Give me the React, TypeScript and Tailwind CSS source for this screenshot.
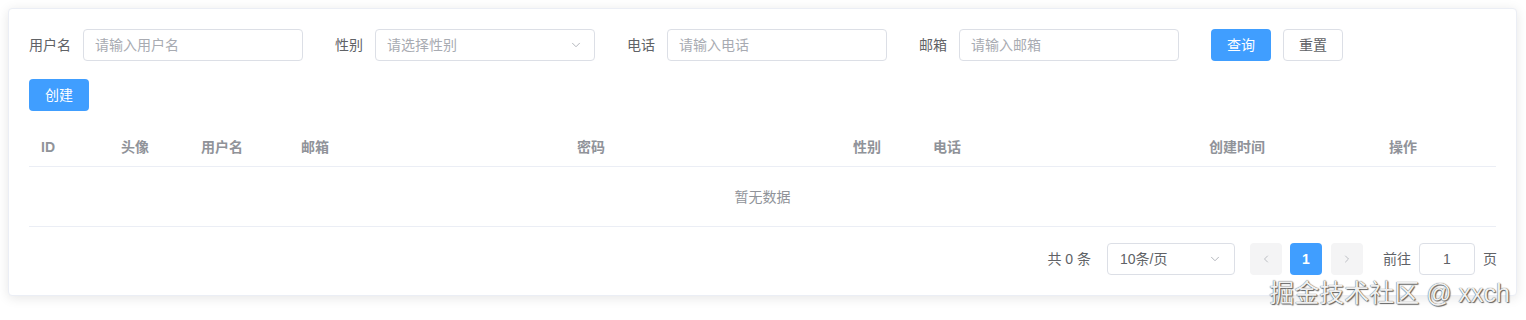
import { ChevronDown, ChevronLeft, ChevronRight } from "lucide-react";

const columns = [
  "ID",
  "头像",
  "用户名",
  "邮箱",
  "密码",
  "性别",
  "电话",
  "创建时间",
  "操作",
];

function TextInput({ placeholder }: { placeholder: string }) {
  return (
    <input
      className="h-8 w-[220px] rounded border border-[#dcdfe6] bg-white px-[11px] text-sm text-[#606266] outline-none placeholder:text-[#a8abb2]"
      placeholder={placeholder}
    />
  );
}

function FormItem({ label, children }: { label: string; children: React.ReactNode }) {
  return (
    <div className="mr-8 flex items-center">
      <label className="mr-3 text-sm leading-8 text-[#606266]">{label}</label>
      {children}
    </div>
  );
}

export default function App() {
  return (
    <div
      className="relative min-h-[320px] bg-white pl-[8px] pr-[9px] pt-[8px]"
      style={{ fontFamily: '"Helvetica Neue", "Liberation Sans", "Noto Sans CJK SC", sans-serif' }}
    >
      <div className="rounded border border-[#ebeef5] bg-white p-5 shadow-[0_2px_12px_0_rgba(0,0,0,0.1)]">
        {/* search form */}
        <div className="flex items-center">
          <FormItem label="用户名">
            <TextInput placeholder="请输入用户名" />
          </FormItem>
          <FormItem label="性别">
            <div className="flex h-8 w-[220px] items-center justify-between rounded border border-[#dcdfe6] pl-[11px] pr-[11px]">
              <span className="text-sm text-[#a8abb2]">请选择性别</span>
              <ChevronDown size={14} strokeWidth={1.5} className="text-[#a8abb2]" />
            </div>
          </FormItem>
          <FormItem label="电话">
            <TextInput placeholder="请输入电话" />
          </FormItem>
          <FormItem label="邮箱">
            <TextInput placeholder="请输入邮箱" />
          </FormItem>
          <button className="h-8 w-[60px] rounded bg-[#409eff] text-sm text-white">查询</button>
          <button className="ml-3 h-8 w-[60px] rounded border border-[#dcdfe6] bg-white text-sm text-[#606266]">
            重置
          </button>
        </div>

        <div className="mt-[18px]">
          <button className="h-8 w-[60px] rounded bg-[#409eff] text-sm text-white">创建</button>
        </div>

        {/* table */}
        <div className="mt-4">
          <div className="grid h-10 grid-cols-[80px_80px_100px_276px_276px_80px_276px_180px_1fr] items-center border-b border-[#ebeef5]">
            {columns.map((c) => (
              <div key={c} className="px-3 text-sm font-bold text-[#909399]">
                {c}
              </div>
            ))}
          </div>
          <div className="flex h-[60px] items-center justify-center border-b border-[#ebeef5] text-sm text-[#909399]">
            暂无数据
          </div>
        </div>

        {/* pagination */}
        <div className="-mr-[1px] mt-4 flex h-8 items-center justify-end text-sm text-[#606266]">
          <span>共 0 条</span>
          <div className="ml-4 flex h-8 w-[128px] items-center justify-between rounded border border-[#dcdfe6] px-3">
            <span>10条/页</span>
            <ChevronDown size={14} strokeWidth={1.5} className="text-[#a8abb2]" />
          </div>
          <button className="ml-[15px] flex h-8 w-8 items-center justify-center rounded bg-[#f4f4f5] text-[#a8abb2]">
            <ChevronLeft size={12} strokeWidth={1.5} />
          </button>
          <button className="ml-2 flex h-8 w-8 items-center justify-center rounded bg-[#409eff] font-bold text-white">
            1
          </button>
          <button className="ml-[9px] flex h-8 w-8 items-center justify-center rounded bg-[#f4f4f5] text-[#a8abb2]">
            <ChevronRight size={12} strokeWidth={1.5} />
          </button>
          <span className="ml-5">前往</span>
          <input
            className="mx-2 h-8 w-[56px] rounded border border-[#dcdfe6] text-center text-sm text-[#606266] outline-none"
            defaultValue="1"
          />
          <span>页</span>
        </div>
      </div>

      {/* watermark */}
      <div className="pointer-events-none absolute right-[16px] top-[278px] text-[25px] leading-[30px] text-[#f0f0f0] [text-shadow:0_0_1px_#333,1px_1px_1px_#666]">
        掘金技术社区 @ xxch
      </div>
    </div>
  );
}
